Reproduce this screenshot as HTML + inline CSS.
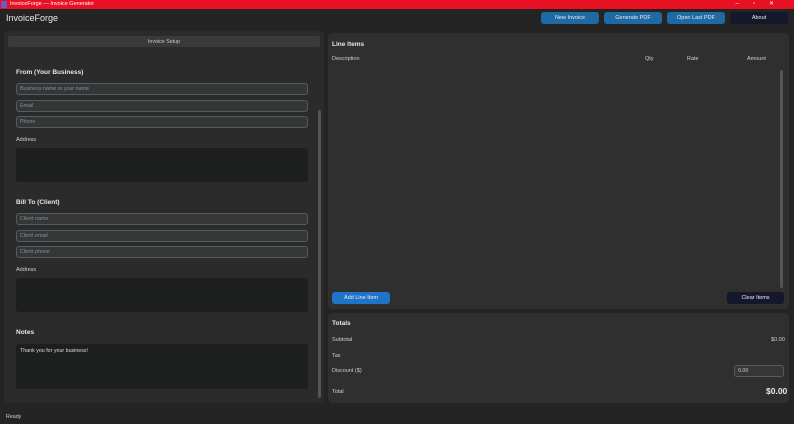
<!DOCTYPE html><html><head><style>
*{margin:0;padding:0;box-sizing:border-box}
body{width:794px;height:424px;background:#242424;font-family:"Liberation Sans",sans-serif;color:#dce4ee;position:relative;overflow:hidden;font-size:6px}
.a{position:absolute}
.tb{left:0;top:0;width:794px;height:9px;background:#e81123;color:#fff;font-size:5.5px;line-height:9px;padding-left:10px}
.btn{position:absolute;top:12px;height:12px;border-radius:3px;background:#1f6aa5;color:#e8eef5;font-size:5.5px;text-align:center;line-height:13px}
.inp{position:absolute;left:16px;width:292px;height:12px;border:1px solid #565b5e;border-radius:3px;background:#343638;color:#8a8f94;font-size:5.3px;line-height:11px;padding-left:3px}
.ta{position:absolute;left:16px;width:292px;background:#1d1e1e;border-radius:3px}
.h{position:absolute;font-size:6.5px;font-weight:bold;color:#e6e6e6;margin-top:1px}
.l{position:absolute;font-size:5.5px;color:#d0d0d0;margin-top:1px}
</style></head><body>
<div class="a tb">InvoiceForge — Invoice Generator</div>
<div class="a" style="left:1px;top:1px;width:6px;height:7px;background:#6a5ad0;border-radius:1px"></div>
<div class="a" style="right:6px;top:0;color:#fff;font-size:6px;line-height:8px;letter-spacing:14px">–▫✕</div>
<div class="a" style="left:6px;top:13px;font-size:9px;color:#e8e8e8">InvoiceForge</div>
<div class="btn" style="left:541px;width:58px">New Invoice</div>
<div class="btn" style="left:604px;width:58px">Generate PDF</div>
<div class="btn" style="left:667px;width:58px">Open Last PDF</div>
<div class="btn" style="left:730px;width:58px;background:#14182a">About</div>

<div class="a" style="left:4px;top:31px;width:320px;height:372px;background:#2b2b2b;border-radius:4px"></div>
<div class="a" style="left:8px;top:36px;width:312px;height:11px;background:#3a3a3a;border-radius:2px;text-align:center;font-size:5.3px;line-height:12px;color:#ccc">Invoice Setup</div>
<div class="a" style="left:318px;top:110px;width:3px;height:288px;background:#555;border-radius:2px"></div>
<div class="h" style="left:16px;top:68px">From (Your Business)</div>
<div class="inp" style="top:83px">Business name or your name</div>
<div class="inp" style="top:100px">Email</div>
<div class="inp" style="top:116px">Phone</div>
<div class="l" style="left:16px;top:136px">Address</div>
<div class="ta" style="top:148px;height:34px"></div>
<div class="h" style="left:16px;top:198px">Bill To (Client)</div>
<div class="inp" style="top:213px">Client name</div>
<div class="inp" style="top:230px">Client email</div>
<div class="inp" style="top:246px">Client phone</div>
<div class="l" style="left:16px;top:266px">Address</div>
<div class="ta" style="top:278px;height:34px"></div>
<div class="h" style="left:16px;top:328px">Notes</div>
<div class="ta" style="top:344px;height:45px;color:#ddd;font-size:5.3px;padding:4px 4px">Thank you for your business!</div>

<div class="a" style="left:328px;top:33px;width:461px;height:276px;background:#2f2f2f;border-radius:4px"></div>
<div class="h" style="left:332px;top:40px">Line Items</div>
<div class="l" style="left:332px;top:55px">Description</div>
<div class="l" style="left:645px;top:55px">Qty</div>
<div class="l" style="left:687px;top:55px">Rate</div>
<div class="l" style="left:747px;top:55px">Amount</div>
<div class="a" style="left:780px;top:70px;width:3px;height:218px;background:#555;border-radius:2px"></div>
<div class="btn" style="left:332px;top:292px;width:58px;background:#1f74c8">Add Line Item</div>
<div class="btn" style="left:727px;top:292px;width:57px;background:#14182a">Clear Items</div>

<div class="a" style="left:328px;top:313px;width:461px;height:90px;background:#2f2f2f;border-radius:4px"></div>
<div class="h" style="left:332px;top:319px">Totals</div>
<div class="l" style="left:332px;top:336px">Subtotal</div>
<div class="l" style="left:771px;top:336px">$0.00</div>
<div class="l" style="left:332px;top:352px">Tax</div>
<div class="l" style="left:332px;top:367px">Discount ($)</div>
<div class="inp" style="left:734px;top:365px;width:50px;color:#ccc">0.00</div>
<div class="l" style="left:332px;top:388px">Total</div>
<div class="a" style="left:766px;top:386px;font-size:8.5px;font-weight:bold;color:#e6e6e6">$0.00</div>

<div class="l" style="left:6px;top:413px;font-size:5.3px">Ready</div>
</body></html>
